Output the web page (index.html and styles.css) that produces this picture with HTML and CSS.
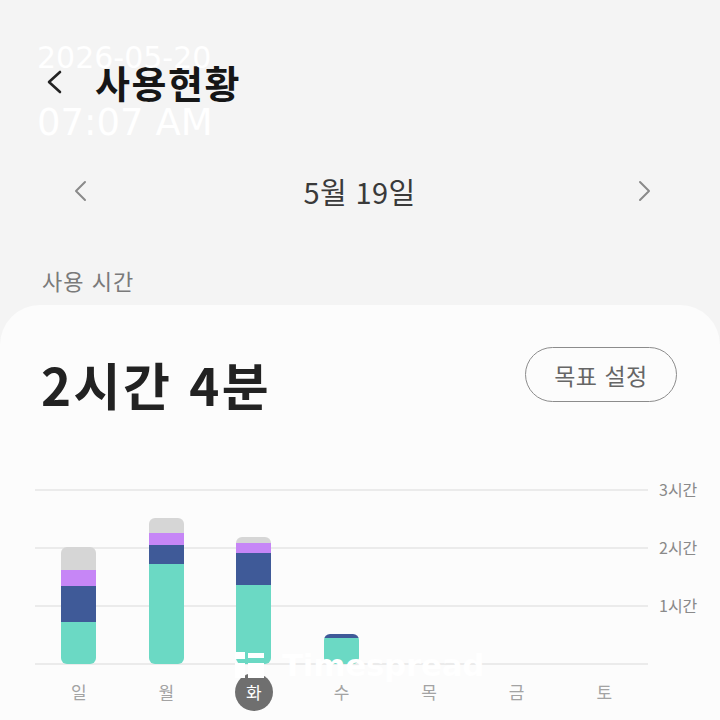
FILE: index.html
```html
<!DOCTYPE html>
<html lang="ko">
<head>
<meta charset="utf-8">
<title>사용현황</title>
<link rel="stylesheet" href="styles.css">
</head>
<body>
<div class="screen">
  <header class="appbar">
    <svg class="back" width="18" height="24" viewBox="0 0 18 24"><path d="M15 2 L4 12 L15 22" fill="none" stroke="#222" stroke-width="2.6" stroke-linecap="round" stroke-linejoin="round"/></svg>
    <h1 class="title">사용현황</h1>
  </header>

  <nav class="datenav">
    <svg class="nav-prev" width="14" height="22" viewBox="0 0 14 22"><path d="M12 2 L3 11 L12 20" fill="none" stroke="#8a8a8a" stroke-width="2" stroke-linecap="round" stroke-linejoin="round"/></svg>
    <div class="date">5월 19일</div>
    <svg class="nav-next" width="14" height="22" viewBox="0 0 14 22"><path d="M2 2 L11 11 L2 20" fill="none" stroke="#8a8a8a" stroke-width="2" stroke-linecap="round" stroke-linejoin="round"/></svg>
  </nav>

  <div class="section-label">사용 시간</div>

  <section class="card">
    <div class="card-head">
      <div class="total">2시간 4분</div>
      <button class="goal">목표 설정</button>
    </div>

    <div class="chart">
      <div class="plot">
        <div class="gridlines">
          <div class="gl"></div>
          <div class="gl"></div>
          <div class="gl"></div>
          <div class="gl-base"></div>
        </div>
        <div class="bars">
          <div class="col"><div class="bar">
            <div class="seg s-gray" style="height:23px"></div>
            <div class="seg s-purple" style="height:16px"></div>
            <div class="seg s-navy" style="height:36px"></div>
            <div class="seg s-teal" style="height:42px"></div>
          </div></div>
          <div class="col"><div class="bar">
            <div class="seg s-gray" style="height:15px"></div>
            <div class="seg s-purple" style="height:12px"></div>
            <div class="seg s-navy" style="height:19px"></div>
            <div class="seg s-teal" style="height:100px"></div>
          </div></div>
          <div class="col"><div class="bar">
            <div class="seg s-gray" style="height:6px"></div>
            <div class="seg s-purple" style="height:10px"></div>
            <div class="seg s-navy" style="height:32px"></div>
            <div class="seg s-teal" style="height:79px"></div>
          </div></div>
          <div class="col"><div class="bar">
            <div class="seg s-navy" style="height:4px"></div>
            <div class="seg s-teal" style="height:26px"></div>
          </div></div>
          <div class="col"></div>
          <div class="col"></div>
          <div class="col"></div>
        </div>
      </div>
      <div class="axis">
        <div class="tick">3시간</div>
        <div class="tick">2시간</div>
        <div class="tick">1시간</div>
      </div>
      <div class="days">
        <div class="day">일</div>
        <div class="day">월</div>
        <div class="day"><span class="day-active">화</span></div>
        <div class="day">수</div>
        <div class="day">목</div>
        <div class="day">금</div>
        <div class="day">토</div>
      </div>
    </div>
  </section>

  <div class="stamp">
    <div class="stamp-date">2026-05-20</div>
    <div class="stamp-time">07:07 AM</div>
  </div>

  <div class="watermark">
    <svg class="wm-icon" width="29" height="26" viewBox="0 0 29 26">
      <rect x="0" y="0" width="10" height="7" fill="#fff"/>
      <rect x="0" y="11" width="10" height="15" fill="#fff"/>
      <rect x="13" y="1" width="16" height="5" fill="#fff"/>
      <rect x="13" y="11" width="16" height="15" fill="#fff"/>
    </svg>
    <span class="wm-text">Timespread</span>
  </div>
</div>
</body>
</html>
```

FILE: styles.css
```css
* { box-sizing: border-box; }

html, body {
  margin: 0;
  padding: 0;
  background: #f4f4f4;
}

body {
  font-family: "Noto Sans CJK KR", "Noto Sans", sans-serif;
  color: #222;
}

.screen {
  position: relative;
  width: 720px;
  height: 720px;
  overflow: hidden;
  display: flex;
  flex-direction: column;
}

/* app bar */
.appbar {
  height: 56px;
  margin-top: 54px;
  display: flex;
  align-items: center;
  padding-left: 45px;
}

.back { flex: none; }

.title {
  margin: 0 0 0 32px;
  font-size: 38px;
  font-weight: 700;
  line-height: 56px;
  letter-spacing: 1.5px;
  color: #161616;
}

/* date navigation */
.datenav {
  height: 56px;
  margin-top: 53px;
  display: grid;
  grid-template-columns: 1fr auto 1fr;
  align-items: center;
  padding: 0 68px 0 73px;
}

.nav-prev { justify-self: start; }
.nav-next { justify-self: end; }

.date {
  font-size: 29px;
  line-height: 56px;
  color: #3a3a3a;
  font-weight: 400;
  letter-spacing: 0.4px;
  margin-right: 6px;
}

.section-label {
  margin-top: 47px;
  padding-left: 42px;
  font-size: 22px;
  line-height: 28px;
  letter-spacing: 1px;
  color: #7a7a7a;
}

/* card */
.card {
  flex: 1;
  margin-top: 11px;
  background: #fcfcfc;
  border-radius: 40px 40px 0 0;
  padding-top: 42px;
}

.card-head {
  display: flex;
  justify-content: space-between;
  align-items: flex-start;
  padding: 0 43px 0 41px;
}

.total {
  margin-top: 9px;
  font-size: 51px;
  font-weight: 700;
  line-height: 56px;
  letter-spacing: 2.5px;
  color: #222;
}

.goal {
  width: 152px;
  height: 55px;
  border: 1.5px solid #8c8c8c;
  border-radius: 28px;
  background: transparent;
  font-family: inherit;
  font-size: 23px;
  letter-spacing: 0.5px;
  color: #666;
  padding: 0;
}

/* chart */
.chart {
  margin-top: 77px;
  padding-left: 35px;
  display: grid;
  grid-template-columns: 613px 1fr;
  grid-template-rows: 176px 54px;
}

.plot {
  display: grid;
}

.gridlines,
.bars {
  grid-area: 1 / 1;
}

.gl {
  height: 58px;
  border-top: 2px solid #ebebeb;
}

.gl-base {
  height: 2px;
  background: #ebebeb;
}

.bars {
  height: 175px;
  display: grid;
  grid-template-columns: repeat(7, 1fr);
  align-items: end;
  justify-items: center;
}

.bar {
  width: 35px;
  border-radius: 6px;
  overflow: hidden;
  display: flex;
  flex-direction: column;
}

.s-gray { background: #d6d6d6; }
.s-purple { background: #c686f6; }
.s-navy { background: #3f5a98; }
.s-teal { background: #6bd9c4; }

.axis {
  margin-top: -10px;
  padding-left: 11px;
  display: flex;
  flex-direction: column;
}

.tick {
  height: 58px;
  font-size: 16px;
  line-height: 20px;
  color: #8a8a8a;
}

.days {
  grid-column: 1;
  display: grid;
  grid-template-columns: repeat(7, 1fr);
  align-items: center;
  justify-items: center;
}

.day {
  font-size: 17px;
  color: #a3a3a3;
  line-height: 20px;
}

.day-active {
  display: flex;
  align-items: center;
  justify-content: center;
  width: 38px;
  height: 38px;
  border-radius: 50%;
  background: #6f6f6f;
  color: #fff;
}

/* overlays */
.stamp {
  position: absolute;
  left: 37px;
  top: 43px;
  font-family: "DejaVu Sans", sans-serif;
  color: #fff;
}

.stamp-date {
  font-size: 30px;
  line-height: 30px;
}

.stamp-time {
  margin-top: 31px;
  font-size: 37px;
  line-height: 37px;
}

.watermark {
  position: absolute;
  left: 235px;
  top: 652px;
  display: flex;
  align-items: center;
  gap: 18px;
  color: #fff;
}

.wm-text {
  font-family: "DejaVu Sans", sans-serif;
  font-weight: 700;
  font-size: 31px;
  line-height: 26px;
  letter-spacing: -0.3px;
}
```
